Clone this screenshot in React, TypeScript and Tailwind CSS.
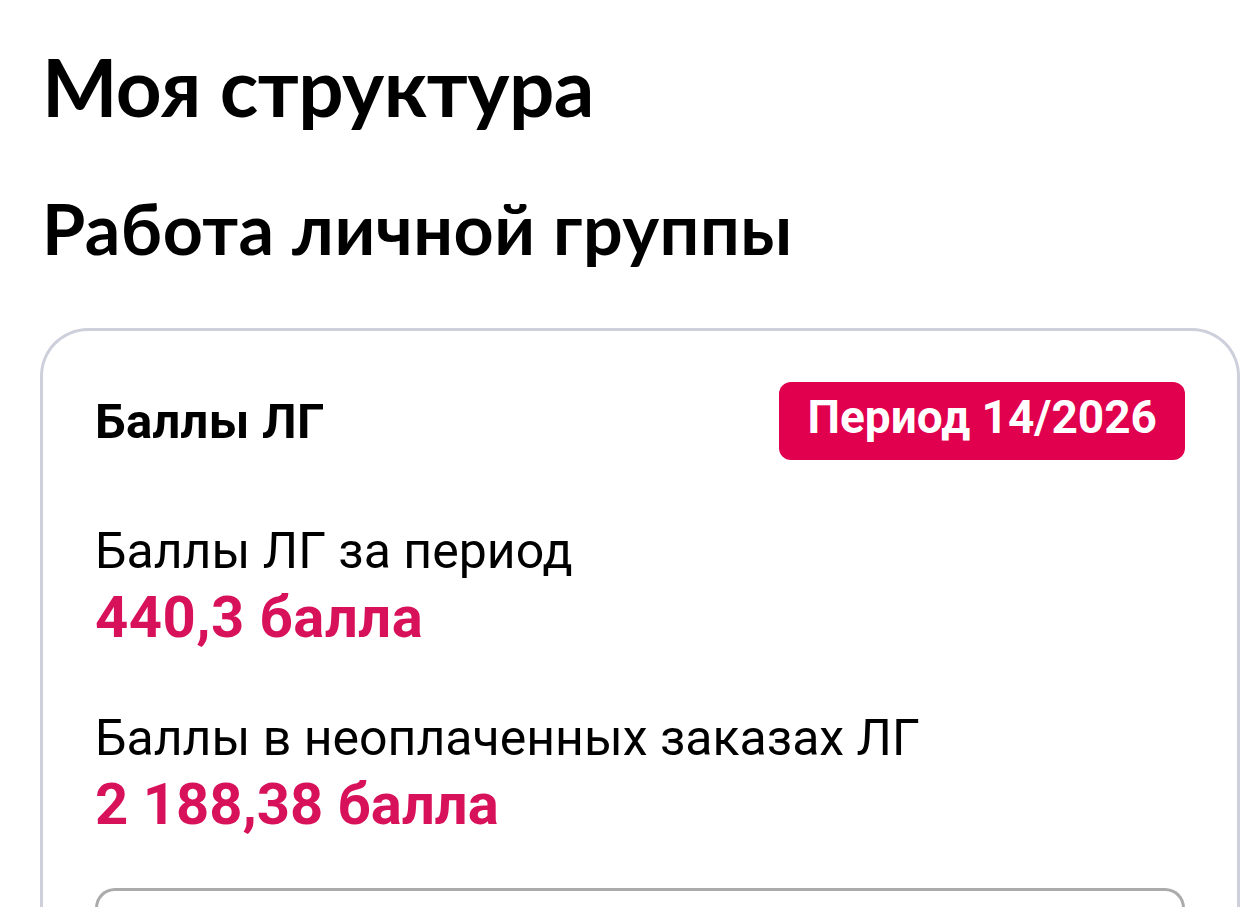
export default function App() {
  return (
    <div className="min-h-screen bg-white font-['Lato','Noto_Sans',sans-serif] text-black">
      <div className="px-[42px] pt-[46px]">
        <h1 className="text-[80px] font-bold leading-none tracking-[-0.5px]">Моя структура</h1>
        <h2 className="mt-[67px] text-[70px] font-bold leading-none tracking-[0.5px]">Работа личной группы</h2>
      </div>

      {/* Карточка баллов ЛГ */}
      <div className="ml-[40px] mr-[8px] mt-[65px] rounded-t-[48px] border-[3px] border-b-0 border-[#cdd0db] px-[52px] pt-[51px] pb-10 font-['Roboto',sans-serif]">
        <div className="flex items-center justify-between">
          <div className="text-[49px] font-bold leading-none tracking-[0.3px]">Баллы ЛГ</div>
          <div className="rounded-[12px] bg-[#e0004d] px-[28px] pt-[12px] pb-[20px] text-[46px] font-bold leading-none text-white">
            Период 14/2026
          </div>
        </div>

        <div className="mt-[66px]">
          <div className="text-[50px] leading-none">Баллы ЛГ за период</div>
          <div className="mt-[12px] text-[58px] font-bold leading-none tracking-[0.5px] text-[#d8125a]">440,3 балла</div>
        </div>

        <div className="mt-[67px]">
          <div className="text-[50px] leading-none">Баллы в неоплаченных заказах ЛГ</div>
          <div className="mt-[12px] text-[58px] font-bold leading-none text-[#d8125a]">2 188,38 балла</div>
        </div>

        <div className="mt-[55px] h-[60px] rounded-t-[20px] border-[3px] border-b-0 border-[#ababab]" />
      </div>
    </div>
  );
}
